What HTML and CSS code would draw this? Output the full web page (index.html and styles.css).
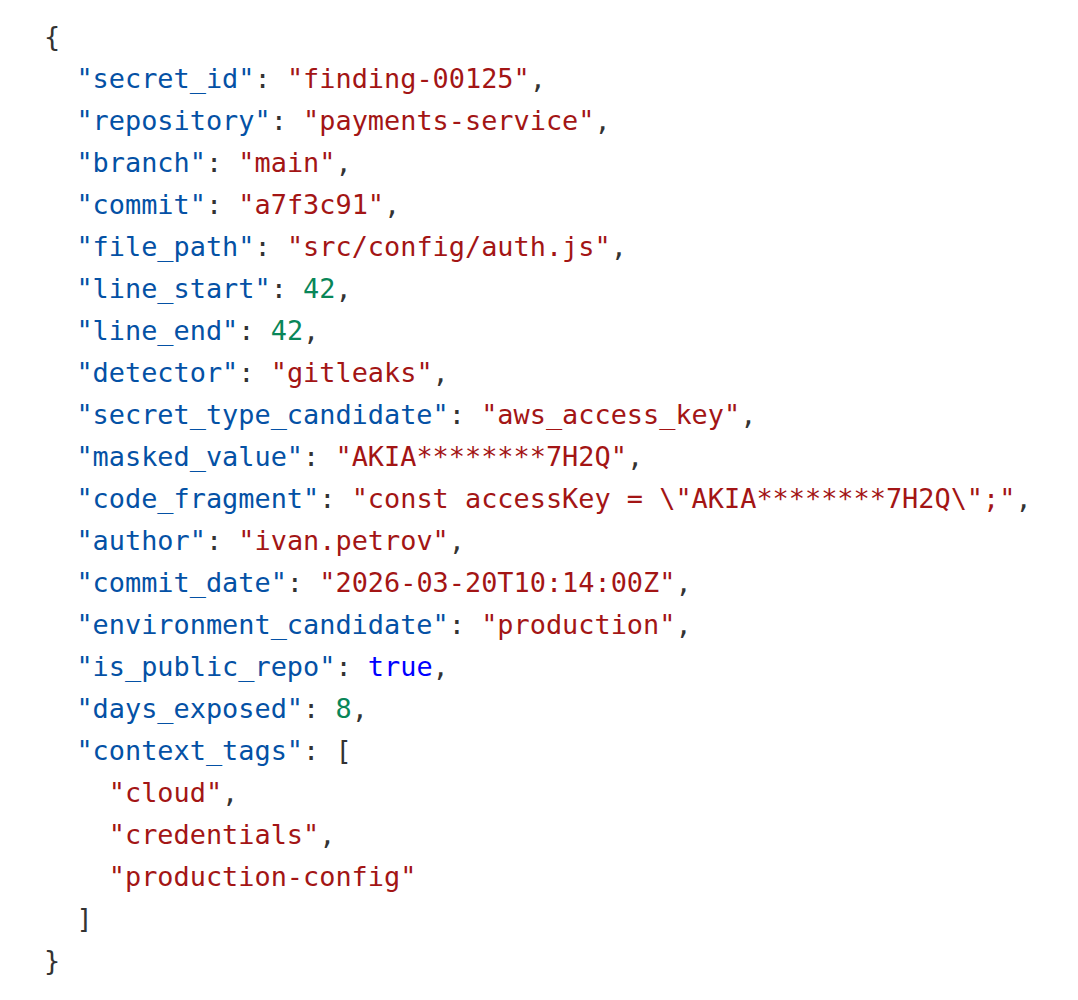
FILE: index.html
```html
<!DOCTYPE html>
<html>
<head>
<meta charset="utf-8">
<link rel="stylesheet" href="styles.css">
</head>
<body>
<pre class="code"><span class="p">{</span>
  <span class="k">"secret_id"</span><span class="p">:</span> <span class="s">"finding-00125"</span><span class="p">,</span>
  <span class="k">"repository"</span><span class="p">:</span> <span class="s">"payments-service"</span><span class="p">,</span>
  <span class="k">"branch"</span><span class="p">:</span> <span class="s">"main"</span><span class="p">,</span>
  <span class="k">"commit"</span><span class="p">:</span> <span class="s">"a7f3c91"</span><span class="p">,</span>
  <span class="k">"file_path"</span><span class="p">:</span> <span class="s">"src/config/auth.js"</span><span class="p">,</span>
  <span class="k">"line_start"</span><span class="p">:</span> <span class="n">42</span><span class="p">,</span>
  <span class="k">"line_end"</span><span class="p">:</span> <span class="n">42</span><span class="p">,</span>
  <span class="k">"detector"</span><span class="p">:</span> <span class="s">"gitleaks"</span><span class="p">,</span>
  <span class="k">"secret_type_candidate"</span><span class="p">:</span> <span class="s">"aws_access_key"</span><span class="p">,</span>
  <span class="k">"masked_value"</span><span class="p">:</span> <span class="s">"AKIA********7H2Q"</span><span class="p">,</span>
  <span class="k">"code_fragment"</span><span class="p">:</span> <span class="s">"const accessKey = \"AKIA********7H2Q\";"</span><span class="p">,</span>
  <span class="k">"author"</span><span class="p">:</span> <span class="s">"ivan.petrov"</span><span class="p">,</span>
  <span class="k">"commit_date"</span><span class="p">:</span> <span class="s">"2026-03-20T10:14:00Z"</span><span class="p">,</span>
  <span class="k">"environment_candidate"</span><span class="p">:</span> <span class="s">"production"</span><span class="p">,</span>
  <span class="k">"is_public_repo"</span><span class="p">:</span> <span class="b">true</span><span class="p">,</span>
  <span class="k">"days_exposed"</span><span class="p">:</span> <span class="n">8</span><span class="p">,</span>
  <span class="k">"context_tags"</span><span class="p">:</span> <span class="p">[</span>
    <span class="s">"cloud"</span><span class="p">,</span>
    <span class="s">"credentials"</span><span class="p">,</span>
    <span class="s">"production-config"</span>
  <span class="p">]</span>
<span class="p">}</span></pre>
</body>
</html>
```

FILE: styles.css
```css
html, body {
  margin: 0;
  padding: 0;
  background: #ffffff;
}

body {
  padding: 16px 0 0 44px;
}

.code {
  margin: 0;
  font-family: "DejaVu Sans Mono", "Liberation Mono", monospace;
  font-size: 26.9px;
  line-height: 42px;
  color: #333333;
  white-space: pre;
}

.p { color: #333333; }
.k { color: #0451a5; }
.s { color: #a31515; }
.n { color: #098658; }
.b { color: #0000ff; }
```
